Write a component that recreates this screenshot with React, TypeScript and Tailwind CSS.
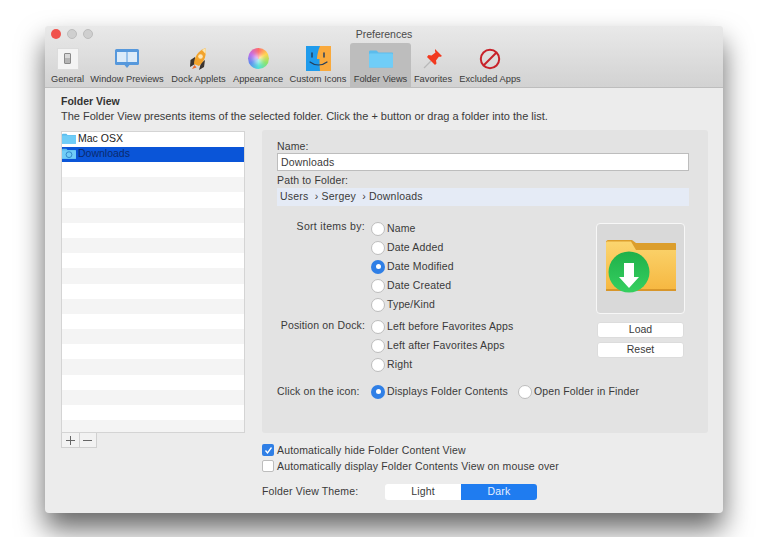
import type {ReactNode} from 'react';

const font = {fontFamily: '"Liberation Sans", Arial, sans-serif'};

function GeneralIcon() {
  return (
    <div className="w-[22px] h-[22px] bg-[#f4f4f4] border border-[#dcdcdc] flex items-center justify-center">
      <div className="w-[7px] h-[11px] bg-[#d8d8d8] border border-[#8a8a8a] rounded-[1px] flex flex-col justify-end">
        <div className="h-[5px] bg-[#b5b5b5]" />
      </div>
    </div>
  );
}

function PreviewsIcon() {
  return (
    <svg width="26" height="22" viewBox="0 0 26 22">
      <rect x="1" y="1" width="24" height="16" rx="1.500" fill="#5698dc" />
      <rect x="3" y="4" width="9.500" height="10" fill="#dcebf9" />
      <rect x="13.500" y="4" width="9.500" height="10" fill="#dcebf9" />
      <path d="M10.500 17h5L13 20z" fill="#5698dc" />
    </svg>
  );
}

function RocketIcon() {
  return (
    <svg width="20" height="24" viewBox="0 0 20 24">
      <path d="M6 10 1.500 13 1 20l5-3z" fill="#3b3430" />
      <path d="M12 16l-2 7 5-3 1-7z" fill="#3b3430" />
      <path d="M5 17C5 10 9 4 16.500 1c1 7-.5 13-6.500 18z" fill="#f2a32c" />
      <path d="M13 3l3.500-2c.4 2 .4 4 .1 6z" fill="#fbe6b0" />
      <circle cx="11.500" cy="9.500" r="2.300" fill="#fde7b7" />
      <path d="M5.500 18 3 22l4.500-1.500z" fill="#ef6a2a" />
    </svg>
  );
}

function WheelIcon() {
  return (
    <div className="w-[21px] h-[21px] rounded-full bg-[conic-gradient(#ff6b6b,#ffd54f,#8be36b,#4fe0d8,#5a8cf0,#c46be8,#ff6b6b)] flex items-center justify-center">
      <div className="w-[10px] h-[10px] rounded-full bg-white/60 blur-[2px]" />
    </div>
  );
}

function FinderIcon() {
  return (
    <svg width="25" height="25" viewBox="0 0 25 25">
      <rect width="25" height="25" fill="#f9a93c" />
      <path d="M0 0h14c-2 5-3 9-3 13h2.500c0 4 0 8 .5 12H0z" fill="#1f9bec" />
      <path d="M6 7v4M18 7v4" stroke="#27405c" strokeWidth="1.500" strokeLinecap="round" />
      <path d="M4 16c5 4 12 4 17 0" fill="none" stroke="#27405c" strokeWidth="1.200" strokeLinecap="round" />
    </svg>
  );
}

function FolderIcon({w, h, badge}: {w: number; h: number; badge?: boolean}) {
  return (
    <svg width={w} height={h} viewBox="0 0 24 18">
      <path d="M0 2.500C0 1.500.6 1 1.500 1h6L9.500 3H23c.6 0 1 .4 1 1v13c0 .6-.4 1-1 1H1c-.6 0-1-.4-1-1z" fill="#5cbcec" />
      <rect y="4" width="24" height="14" rx="1" fill="#70cdf7" />
      {badge && <circle cx="12" cy="11" r="5" fill="none" stroke="#2a7fc4" strokeWidth="1.500" />}
    </svg>
  );
}

function PinIcon() {
  return (
    <svg width="20" height="22" viewBox="0 0 20 22">
      <path d="M1 20 8 13" stroke="#b9b9b9" strokeWidth="1.200" />
      <path d="M12 1l7 7-2 1-1-.5-3 4 .5 3-1.500 1.500-8-8L5.500 7l3 .5 4-3L12 3z" fill="#f2391f" />
    </svg>
  );
}

function BlockedIcon() {
  return (
    <svg width="22" height="22" viewBox="0 0 22 22">
      <circle cx="11" cy="11" r="9.200" fill="none" stroke="#c8222a" strokeWidth="2" />
      <path d="M4.500 17.500 17.500 4.500" stroke="#c8222a" strokeWidth="2" />
    </svg>
  );
}

function DownloadsArt() {
  return (
    <svg width="72" height="56" viewBox="0 0 72 56">
      <defs>
        <linearGradient id="front" x1="0" y1="0" x2="0" y2="1">
          <stop offset="0" stopColor="#fbd56f" />
          <stop offset="1" stopColor="#f6b740" />
        </linearGradient>
        <linearGradient id="ball" x1="0" y1="0" x2="0" y2="1">
          <stop offset="0" stopColor="#1fb04a" />
          <stop offset="1" stopColor="#35d060" />
        </linearGradient>
      </defs>
      <path d="M1 4c0-1 1-2 2-2h24l4 3h39c.6 0 1 .4 1 1v8H1z" fill="#dc9e2c" />
      <path d="M1 5c0-1 .6-1.500 1.500-1.500H26l5 8.500h40v39c0 1.500-.5 2-2 2H3c-1.500 0-2-.5-2-2z" fill="url(#front)" />
      <rect x="1" y="51" width="70" height="2" fill="#d8962a" />
      <circle cx="24" cy="34" r="20.500" fill="url(#ball)" />
      <path d="M19 25h10v14h5L24 50 14 39h5z" fill="#fff" />
    </svg>
  );
}

function ToolItem({label, icon, active, w}: {label: string; icon: ReactNode; active?: boolean; w: string}) {
  return (
    <div className={`${w} h-[44px] shrink-0 flex flex-col items-center rounded-t-[3px] ${active ? 'bg-[#bdbdbd]' : ''}`}>
      <div className="h-[29px] mt-[1px] flex items-center justify-center">{icon}</div>
      <span className="text-[9.300px] leading-[12px] text-[#3a3a3a] whitespace-nowrap">{label}</span>
    </div>
  );
}

function Radio({label, on, h = 'h-[19px]'}: {label: string; on?: boolean; h?: string}) {
  return (
    <div className={`${h} flex items-center gap-[2px]`}>
      {on ? (
        <div className="w-[14px] h-[14px] rounded-full bg-[#2f7fe6] flex items-center justify-center">
          <div className="w-[5px] h-[5px] rounded-full bg-white" />
        </div>
      ) : (
        <div className="w-[14px] h-[14px] rounded-full bg-white border border-[#bdbdbd]" />
      )}
      <span className="text-[10.500px] leading-none tracking-[0.15px] text-[#3a3a3a]">{label}</span>
    </div>
  );
}

function Check({label, on}: {label: string; on?: boolean}) {
  return (
    <div className="h-[16px] flex items-center gap-[3px]">
      {on ? (
        <div className="w-[12px] h-[12px] rounded-[2px] bg-[#2f7fe6] flex items-center justify-center">
          <svg width="9" height="9" viewBox="0 0 9 9">
            <path d="M1.500 4.500 3.500 7 7.500 1.500" fill="none" stroke="#fff" strokeWidth="1.300" />
          </svg>
        </div>
      ) : (
        <div className="w-[12px] h-[12px] rounded-[2px] bg-white border border-[#bdbdbd]" />
      )}
      <span className="text-[10.500px] leading-none tracking-[0.15px] text-[#3a3a3a]">{label}</span>
    </div>
  );
}

const rows = Array.from({length: 18}, (_, i) => i);

export default function App() {
  return (
    <div className="w-[768px] h-[537px] bg-white pl-[45px] pt-[26px] overflow-hidden" style={font}>
      <div className="w-[678px] h-[487px] bg-[#ececec] rounded-[4px] overflow-hidden shadow-[0_16px_28px_rgba(0,0,0,0.6)] flex flex-col">
        {/* Title bar and toolbar */}
        <div className="h-[62px] shrink-0 bg-gradient-to-b from-[#e9e9e9] to-[#d2d2d2] border-b border-[#bdbdbd]">
          <div className="h-[17px] relative flex items-center justify-center">
            <div className="absolute left-[6px] top-[3px] flex gap-[6px]">
              <div className="w-[10px] h-[10px] rounded-full bg-[#f0524c]" />
              <div className="w-[10px] h-[10px] rounded-full bg-[#cfcfcf] border border-[#bcbcbc]" />
              <div className="w-[10px] h-[10px] rounded-full bg-[#cfcfcf] border border-[#bcbcbc]" />
            </div>
            <span className="text-[10.500px] leading-none text-[#4a4a4a]">Preferences</span>
          </div>
          <div className="flex pl-[6px]">
            <ToolItem w="w-[33px] mr-[6px]" label="General" icon={<GeneralIcon />} />
            <ToolItem w="w-[74px] mr-[6px]" label="Window Previews" icon={<PreviewsIcon />} />
            <ToolItem w="w-[57px] mr-[6px]" label="Dock Applets" icon={<RocketIcon />} />
            <ToolItem w="w-[50px] mr-[6px]" label="Appearance" icon={<WheelIcon />} />
            <ToolItem w="w-[58px] mr-[3px]" label="Custom Icons" icon={<FinderIcon />} />
            <ToolItem w="w-[61px] mr-[3px]" label="Folder Views" active icon={<FolderIcon w={24} h={19} />} />
            <ToolItem w="w-[38px] mr-[7px]" label="Favorites" icon={<PinIcon />} />
            <ToolItem w="w-[62px]" label="Excluded Apps" icon={<BlockedIcon />} />
          </div>
        </div>

        {/* Content */}
        <div className="flex-1 pl-[16px] pr-[15px] pt-[7px]">
          <div className="text-[10.500px] leading-[13px] font-bold text-[#333]">Folder View</div>
          <div className="text-[11px] leading-[16px] text-[#3a3a3a]">
            The Folder View presents items of the selected folder. Click the + button or drag a folder into the list.
          </div>
          <div className="flex mt-[6px]">
            {/* Left column */}
            <div className="w-[184px] mr-[17px] shrink-0">
              <div className="h-[302px] mt-[1px] bg-white border border-[#d4d4d4] overflow-hidden">
                <div className="h-[15px] flex items-center gap-[2px] pb-[2px]">
                  <FolderIcon w={14} h={11} />
                  <span className="text-[10.500px] leading-none text-[#222]">Mac OSX</span>
                </div>
                <div className="h-[15px] bg-[#0a55d8] flex items-center gap-[2px] pb-[2px]">
                  <FolderIcon w={14} h={11} badge />
                  <span className="text-[10.500px] leading-none text-[#0b2a6e]">Downloads</span>
                </div>
                {rows.map((i) => (
                  <div key={i} className={`h-[15.200px] ${i % 2 === 1 ? 'bg-[#f4f4f4]' : 'bg-white'}`} />
                ))}
              </div>
              <div className="flex w-[36px] h-[15px] bg-[#f2f2f2] border border-t-0 border-[#d0d0d0]">
                <div className="flex-1 flex items-center justify-center border-r border-[#d0d0d0]">
                  <svg width="9" height="9" viewBox="0 0 9 9">
                    <path d="M4.500 0v9M0 4.500h9" stroke="#666" strokeWidth="1" />
                  </svg>
                </div>
                <div className="flex-1 flex items-center justify-center">
                  <svg width="9" height="9" viewBox="0 0 9 9">
                    <path d="M0 4.500h9" stroke="#666" strokeWidth="1" />
                  </svg>
                </div>
              </div>
            </div>

            {/* Right column */}
            <div className="flex-1">
              <div className="h-[303px] bg-[#e3e3e3] rounded-[3px] pl-[15px] pr-[19px] pt-[10px]">
                <div className="text-[10.500px] leading-[13px] text-[#3a3a3a] tracking-[0.15px]">Name:</div>
                <div className="h-[18px] bg-white border border-[#bdbdbd] flex items-center px-[3px] pt-[1px] text-[10.500px] text-[#3a3a3a] tracking-[0.15px]">
                  Downloads
                </div>
                <div className="text-[10.500px] leading-[16px] text-[#3a3a3a] tracking-[0.15px] mt-[1px]">Path to Folder:</div>
                <div className="h-[18px] bg-[#e5ebf6] flex items-center px-[3px] text-[10.500px] text-[#3a3a3a] tracking-[0.2px] whitespace-pre">
                  Users  › Sergey  › Downloads
                </div>

                <div className="flex mt-[14px]">
                  <div className="flex-1">
                    <div className="flex">
                      <div className="w-[88px] text-right text-[10.500px] leading-[13px] tracking-[0.3px] text-[#3a3a3a]">Sort items by:</div>
                      <div className="ml-[6px] mt-[-1px]">
                        <Radio label="Name" />
                        <Radio label="Date Added" />
                        <Radio label="Date Modified" on />
                        <Radio label="Date Created" />
                        <Radio label="Type/Kind" />
                      </div>
                    </div>
                    <div className="flex mt-[3px]">
                      <div className="w-[88px] text-right text-[10.500px] leading-[16px] tracking-[0.15px] text-[#3a3a3a]">Position on Dock:</div>
                      <div className="ml-[6px]">
                        <Radio label="Left before Favorites Apps" />
                        <Radio label="Left after Favorites Apps" />
                        <Radio label="Right" />
                      </div>
                    </div>
                  </div>
                  <div className="w-[89px] shrink-0 mt-[3px] mr-[4px]">
                    <div className="h-[91px] bg-[#d9d9d9] border border-[#f7f7f7] rounded-[4px] flex items-center justify-center pb-[5px]">
                      <DownloadsArt />
                    </div>
                    <div className="mt-[8px] mx-[1px] h-[16px] bg-white rounded-[3px] border border-[#dcdcdc] flex items-center justify-center text-[10.500px] text-[#3a3a3a]">Load</div>
                    <div className="mt-[4px] mx-[1px] h-[16px] bg-white rounded-[3px] border border-[#dcdcdc] flex items-center justify-center text-[10.500px] text-[#3a3a3a]">Reset</div>
                  </div>
                </div>

                <div className="flex mt-[8px] items-center">
                  <span className="w-[94px] text-[10.500px] tracking-[0.15px] text-[#3a3a3a]">Click on the icon:</span>
                  <div className="mr-[10px]"><Radio label="Displays Folder Contents" on /></div>
                  <Radio label="Open Folder in Finder" />
                </div>
              </div>

              <div className="mt-[9px]">
                <Check label="Automatically hide Folder Content View" on />
                <Check label="Automatically display Folder Contents View on mouse over" />
              </div>
              <div className="flex items-center mt-[10px]">
                <span className="w-[123px] text-[10.500px] tracking-[0.15px] text-[#3a3a3a]">Folder View Theme:</span>
                <div className="flex w-[152px] h-[16px] rounded-[3px] overflow-hidden text-[10.500px] tracking-[0.15px]">
                  <div className="w-[76px] bg-white flex items-center justify-center text-[#3a3a3a]">Light</div>
                  <div className="flex-1 bg-[#1f7cf0] flex items-center justify-center text-[#e6f0ff]">Dark</div>
                </div>
              </div>
            </div>
          </div>
        </div>
      </div>
    </div>
  );
}
